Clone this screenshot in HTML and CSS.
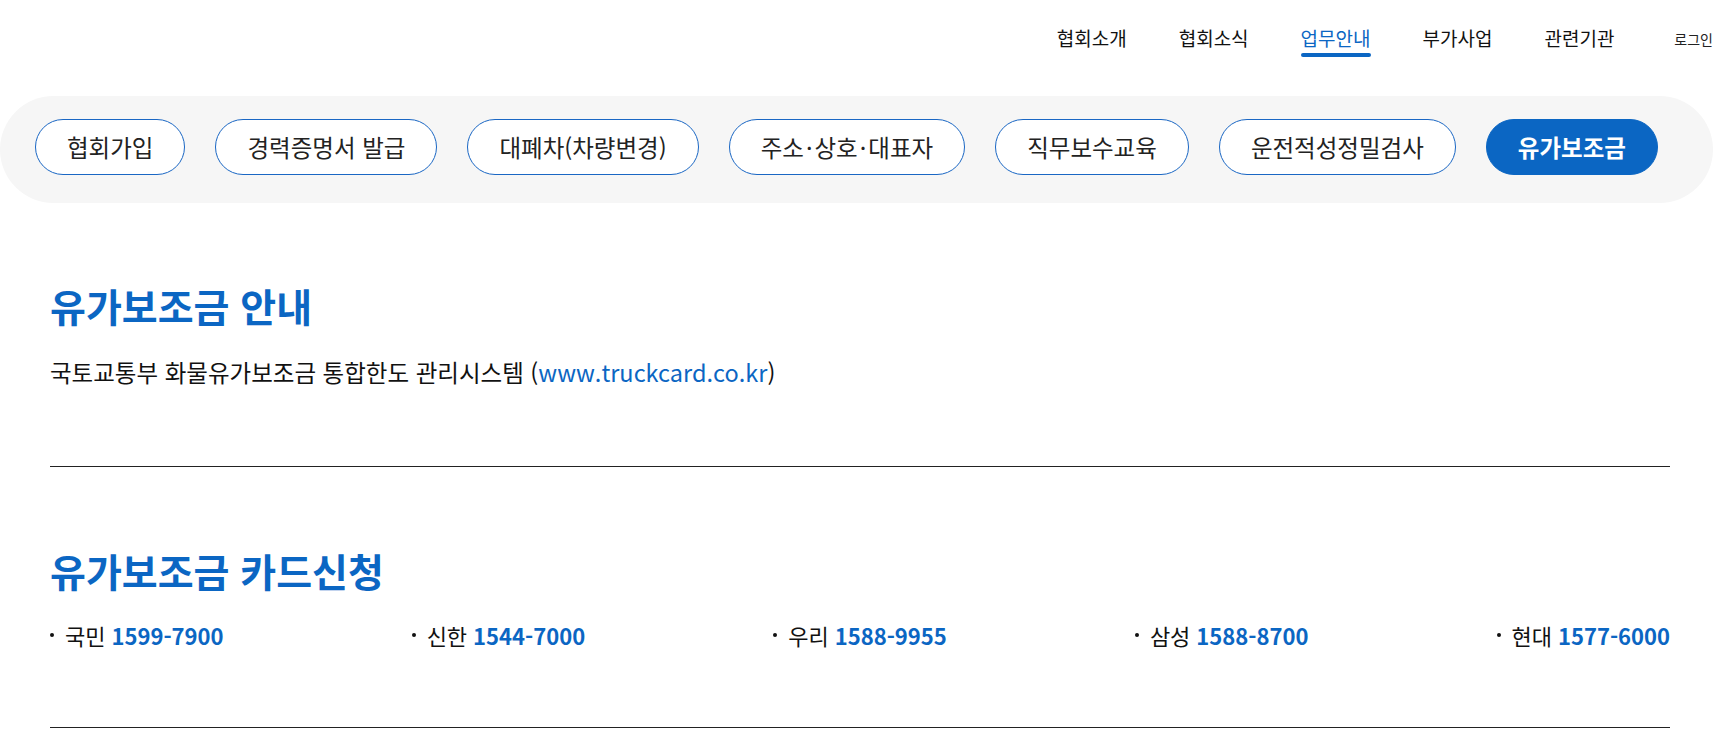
FILE: index.html
```html
<!DOCTYPE html>
<html lang="ko">
<head>
<meta charset="utf-8">
<title>유가보조금 안내</title>
<link rel="stylesheet" href="styles.css">
</head>
<body>
<header class="header">
  <nav class="gnb">
    <a class="gnb-item" href="#">협회소개</a>
    <a class="gnb-item" href="#">협회소식</a>
    <a class="gnb-item is-active" href="#"><span>업무안내</span><i class="gnb-bar"></i></a>
    <a class="gnb-item" href="#">부가사업</a>
    <a class="gnb-item" href="#">관련기관</a>
  </nav>
  <div class="util"><a href="#">로그인</a></div>
</header>

<div class="tabbar">
  <a class="tab" href="#">협회가입</a>
  <a class="tab" href="#">경력증명서 발급</a>
  <a class="tab" href="#">대폐차(차량변경)</a>
  <a class="tab" href="#">주소<span class="mid">·</span>상호<span class="mid">·</span>대표자</a>
  <a class="tab" href="#">직무보수교육</a>
  <a class="tab" href="#">운전적성정밀검사</a>
  <a class="tab is-active" href="#">유가보조금</a>
</div>

<main class="content">
  <section class="sec sec-first">
    <h2 class="sec-title">유가보조금 안내</h2>
    <p class="sec-text">국토교통부 화물유가보조금 통합한도 관리시스템 (<a class="link" href="#">www.truckcard.co.kr</a>)</p>
  </section>
  <section class="sec sec-second">
    <h2 class="sec-title">유가보조금 카드신청</h2>
    <ul class="banks">
      <li class="bank">국민 <strong>1599-7900</strong></li>
      <li class="bank">신한 <strong>1544-7000</strong></li>
      <li class="bank">우리 <strong>1588-9955</strong></li>
      <li class="bank">삼성 <strong>1588-8700</strong></li>
      <li class="bank">현대 <strong>1577-6000</strong></li>
    </ul>
  </section>
</main>
</body>
</html>
```

FILE: styles.css
```css
html, body {
  margin: 0;
  padding: 0;
  overflow-x: hidden;
  background: #fff;
}
body {
  font-family: "Noto Sans CJK KR", "Noto Sans", sans-serif;
  color: #111;
}
a { text-decoration: none; color: inherit; }

.header {
  display: flex;
  align-items: flex-start;
  height: 96px;
}
.gnb {
  margin-left: auto;
  display: flex;
  gap: 52px;
  padding-top: 25px;
}
.gnb-item {
  display: flex;
  flex-direction: column;
  font-size: 19px;
  line-height: 26px;
  color: #111;
}
.gnb-item.is-active { color: #0b66c3; }
.gnb-bar {
  display: block;
  height: 4px;
  margin-top: 2px;
  border-radius: 2px;
  background: #0b66c3;
}
.util {
  flex: 0 0 36px;
  margin-left: 60px;
  padding-top: 29px;
  white-space: nowrap;
  font-size: 14px;
  line-height: 20px;
  color: #222;
}

.tabbar {
  display: flex;
  gap: 30px;
  height: 107px;
  box-sizing: border-box;
  padding: 23px 0 0 35px;
  background: #f6f6f6;
  border-radius: 54px;
}
.tab {
  height: 56px;
  box-sizing: border-box;
  padding: 0 31px;
  display: flex;
  align-items: center;
  border: 1px solid #1a67c4;
  border-radius: 28px;
  background: #fff;
  font-size: 23.5px;
  color: #222;
  white-space: nowrap;
}
.tab .mid {
  margin: 0 2px;
}
.tab.is-active {
  background: #0b66c3;
  border-color: #0b66c3;
  color: #fff;
  font-weight: 700;
}

.content {
  margin: 0 43px 0 50px;
}
.sec {
  border-bottom: 1px solid #222;
}
.sec-first { padding: 80px 0 79px; }
.sec-second { padding: 81px 0 77px; }
.sec-title {
  margin: 0;
  font-size: 39px;
  line-height: 44px;
  font-weight: 700;
  color: #0b66c3;
}
.sec-text {
  margin: 30px 0 0;
  font-size: 23.5px;
  line-height: 30px;
  color: #111;
}
.link { color: #0b66c3; }
.banks {
  list-style: none;
  margin: 28px 0 0;
  padding: 0;
  display: flex;
  justify-content: space-between;
  font-size: 22px;
  line-height: 30px;
}
.bank {
  display: flex;
  align-items: center;
  gap: 6px;
  color: #111;
}
.bank::before {
  content: "";
  width: 4px;
  height: 4px;
  border-radius: 50%;
  background: #111;
  margin-right: 5px;
}
.bank strong {
  color: #0b66c3;
  font-weight: 700;
}
```
